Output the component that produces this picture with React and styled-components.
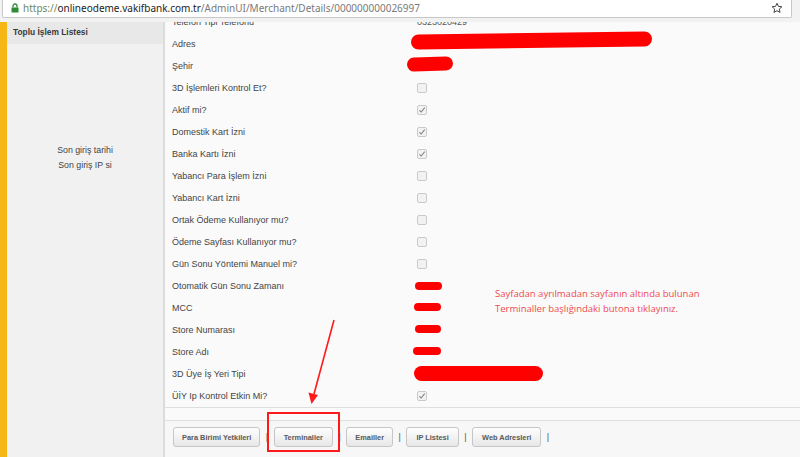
import React from "react";
import styled, { createGlobalStyle } from "styled-components";

const Global = createGlobalStyle`
  html, body { margin: 0; padding: 0; }
  body { width: 800px; height: 457px; overflow: hidden; background: #fafafa; font-family: "Liberation Sans", Arial, sans-serif; }
  * { box-sizing: border-box; }
`;

const Page = styled.div`
  position: relative;
  width: 800px;
  height: 457px;
  overflow: hidden;
  display: flex;
  flex-direction: column;
`;

const Chrome = styled.div`
  height: 22px;
  flex: none;
  background: #f2f2f2;
  display: flex;
  align-items: flex-start;
  padding: 0 8px 0 2px;
`;

const Omnibox = styled.div`
  flex: 1;
  height: 19px;
  margin-top: -1px;
  background: #fff;
  border: 1px solid #c8c8c8;
  border-top: none;
  border-radius: 0 0 2px 2px;
  display: flex;
  align-items: center;
  padding: 0 8px 0 8px;
  gap: 4px;
  font-family: "Noto Sans", "Open Sans", sans-serif;
  font-size: 10px;
`;

const Url = styled.span`
  flex: 1;
  color: #7a7a7a;
  white-space: nowrap;
  b { font-weight: normal; color: #222; }
  i { font-style: normal; color: #6c8a5a; }
`;

const Main = styled.div`
  flex: 1;
  display: flex;
  min-height: 0;
`;

const Stripe = styled.div`
  width: 7px;
  flex: none;
  background: #f6b716;
`;

const Sidebar = styled.div`
  width: 158px;
  flex: none;
  background: #f1f1f1;
  border-right: 2px solid #dcdcdc;
  display: flex;
  flex-direction: column;
`;

const SideItem = styled.div`
  height: 22px;
  background: #e8e8e8;
  padding: 5px 0 0 6px;
  font-size: 8.4px;
  font-weight: bold;
  color: #3a3a3a;
`;

const LoginInfo = styled.div`
  padding-top: 99px;
  text-align: center;
  font-size: 8.8px;
  color: #444;
  line-height: 15px;
`;

const Content = styled.div`
  flex: 1;
  display: flex;
  flex-direction: column;
  min-width: 0;
  overflow: hidden;
  background: #fafafa;
`;

const Form = styled.div`
  margin-top: -11px;
  border-bottom: 1px solid #dedede;
  display: flex;
  flex-direction: column;
`;

const Row = styled.div`
  height: 22px;
  display: grid;
  grid-template-columns: 252px 1fr;
  align-items: center;
`;

const Label = styled.div`
  padding-left: 7px;
  font-size: 9px;
  color: #444;
  white-space: nowrap;
`;

const Value = styled.div`
  display: flex;
  align-items: center;
  font-size: 9px;
  color: #555;
  height: 100%;
`;

const Box = styled.span`
  width: 10px;
  height: 10px;
  border: 1px solid #cacaca;
  border-radius: 2px;
  background: #f2f2f2;
  display: inline-flex;
  align-items: center;
  justify-content: center;
`;

const Redact = styled.span`
  display: inline-block;
  background: #ff0000;
  border-radius: 8px;
`;

const Spacer = styled.div`
  height: 12px;
  flex: none;
`;

const Bar = styled.div`
  flex: 1;
  border-top: 1px solid #dedede;
  background: #f7f7f7;
  display: flex;
  align-items: flex-start;
  padding: 6px 0 0 8px;
  gap: 5px;
`;

const Btn = styled.button`
  height: 20px;
  margin: 0;
  padding: 0 ${(p) => p.$px || 8}px;
  border: 1px solid #c6c6c6;
  border-radius: 3px;
  background: linear-gradient(#fefefe, #e7e7e7);
  font-family: "Liberation Sans", Arial, sans-serif;
  font-weight: bold;
  font-size: 7.4px;
  color: #5a5a5a;
  cursor: pointer;
`;

const Sep = styled.span`
  font-size: 9px;
  color: #555;
  line-height: 20px;
  padding: 0 0.5px;
`;

const Note = styled.div`
  position: absolute;
  left: 495px;
  top: 286px;
  font-family: "Open Sans", "Noto Sans", sans-serif;
  font-size: 9.5px;
  line-height: 15px;
  color: #ee4a50;
`;

const Highlight = styled.div`
  position: absolute;
  left: 267px;
  top: 412px;
  width: 73px;
  height: 40px;
  border: 2px solid #ff1a1a;
`;

const Overlay = styled.svg`
  position: absolute;
  left: 0;
  top: 0;
  pointer-events: none;
`;

const Check = () => (
  <svg width="8" height="8" viewBox="0 0 8 8">
    <path d="M1.4 4.3 L3.2 6 L6.7 1.7" fill="none" stroke="#858585" strokeWidth="1.1" />
  </svg>
);

const Lock = () => (
  <svg width="8" height="10" viewBox="0 0 8 10">
    <path d="M2 4.5 V3 a2 2 0 0 1 4 0 V4.5" fill="none" stroke="#2e8b35" strokeWidth="1.3" />
    <rect x="0.5" y="4.5" width="7" height="5" fill="#2e8b35" />
  </svg>
);

const Star = () => (
  <svg width="12" height="12" viewBox="0 0 24 24">
    <path
      d="M12 2.5l2.9 6.3 6.9.7-5.2 4.6 1.5 6.8L12 17.4l-6.1 3.5 1.5-6.8L2.2 9.5l6.9-.7z"
      fill="none"
      stroke="#444"
      strokeWidth="2"
      strokeLinejoin="round"
    />
  </svg>
);

const rows = [
  { label: "Telefon Tipi Telefonu", text: "0323020429" },
  { label: "Adres", red: { w: 241, h: 15, dx: -6, dy: -4, rot: -0.8 } },
  { label: "Şehir", red: { w: 46, h: 14, dx: -10, dy: -2, rot: -2 } },
  { label: "3D İşlemleri Kontrol Et?", box: false },
  { label: "Aktif mi?", box: true },
  { label: "Domestik Kart İzni", box: true },
  { label: "Banka Kartı İzni", box: true },
  { label: "Yabancı Para İşlem İzni", box: false },
  { label: "Yabancı Kart İzni", box: false },
  { label: "Ortak Ödeme Kullanıyor mu?", box: false },
  { label: "Ödeme Sayfası Kullanıyor mu?", box: false },
  { label: "Gün Sonu Yöntemi Manuel mi?", box: false },
  { label: "Otomatik Gün Sonu Zamanı", red: { w: 27, h: 8, dx: -2, dy: 0 } },
  { label: "MCC", red: { w: 27, h: 8, dx: -3, dy: -1 } },
  { label: "Store Numarası", red: { w: 26, h: 8, dx: -2, dy: -1 } },
  { label: "Store Adı", red: { w: 28, h: 8, dx: -4, dy: -1 } },
  { label: "3D Üye İş Yeri Tipi", red: { w: 129, h: 15, dx: -3, dy: -1 } },
  { label: "ÜİY Ip Kontrol Etkin Mi?", box: true },
];

const renderValue = (r) => {
  if (r.text) return r.text;
  if (r.red) {
    const { w, h, dx, dy, rot = 0 } = r.red;
    return (
      <Redact
        style={{ width: w, height: h, transform: `translate(${dx}px, ${dy}px) rotate(${rot}deg)` }}
      />
    );
  }
  return <Box>{r.box ? <Check /> : null}</Box>;
};

export default function App() {
  return (
    <Page>
      <Global />
      <Chrome>
        <Omnibox>
          <Lock />
          <Url>
            <i>https://</i>
            <b>onlineodeme.vakifbank.com.tr</b>/AdminUI/Merchant/Details/000000000026997
          </Url>
          <Star />
        </Omnibox>
      </Chrome>
      <Main>
        <Stripe />
        <Sidebar>
          <SideItem>Toplu İşlem Listesi</SideItem>
          <LoginInfo>
            <div>Son giriş tarihi</div>
            <div>Son giriş IP si</div>
          </LoginInfo>
        </Sidebar>
        <Content>
          <Form>
            {rows.map((r) => (
              <Row key={r.label}>
                <Label>{r.label}</Label>
                <Value>{renderValue(r)}</Value>
              </Row>
            ))}
          </Form>
          <Spacer />
          <Bar>
            <Btn>Para Birimi Yetkileri</Btn>
            <Sep>|</Sep>
            <Btn $px={9}>Terminaller</Btn>
            <Sep>|</Sep>
            <Btn>Emailler</Btn>
            <Sep>|</Sep>
            <Btn $px={9}>IP Listesi</Btn>
            <Sep>|</Sep>
            <Btn $px={9}>Web Adresleri</Btn>
            <Sep>|</Sep>
          </Bar>
        </Content>
      </Main>
      <Note>
        <div>Sayfadan ayrılmadan sayfanın altında bulunan</div>
        <div>Terminaller başlığındaki butona tıklayınız.</div>
      </Note>
      <Highlight />
      <Overlay width="800" height="457" viewBox="0 0 800 457">
        <line x1="334" y1="320" x2="314" y2="394" stroke="#ff1a1a" strokeWidth="1.6" />
        <path d="M311.5 404 L308.5 392.5 L318 395 Z" fill="#ff1a1a" />
      </Overlay>
    </Page>
  );
}
